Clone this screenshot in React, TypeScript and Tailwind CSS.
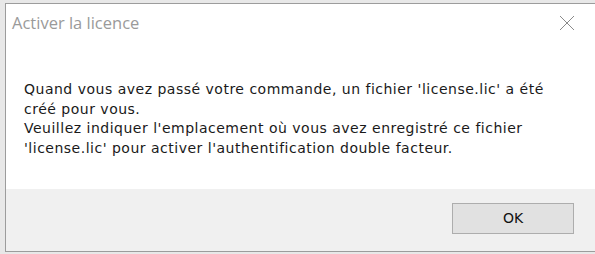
export default function App() {
  return (
    <div className="w-[595px] h-[254px] overflow-hidden bg-[#e8e8e8] pt-[3px] pl-[5px]">
      <div className="w-[600px] h-[249px] flex flex-col bg-white border-l border-t border-b border-[#9c9c9c] font-['Liberation_Sans',sans-serif]">
        {/* title bar */}
        <div className="h-[38px] flex items-center justify-between pl-[6px] pr-[20px]">
          <span className="text-[16.5px] text-[#9a9a9a] font-['Open_Sans',sans-serif] leading-none">Activer la licence</span>
          <svg width="16" height="16" viewBox="0 0 16 16" className="mr-[10px]">
            <path d="M1 1 L15 15 M15 1 L1 15" stroke="#8a8a8a" strokeWidth="1" fill="none" />
          </svg>
        </div>
        {/* message */}
        <div className="flex-1 pl-[18px] pt-[38px] text-[14px] leading-[19.5px] text-[#1a1a1a] font-['DejaVu_Sans',sans-serif] tracking-[0.5px]">
          <p>Quand vous avez passé votre commande, un fichier 'license.lic' a été</p>
          <p>créé pour vous.</p>
          <p>Veuillez indiquer l'emplacement où vous avez enregistré ce fichier</p>
          <p>'license.lic' pour activer l'authentification double facteur.</p>
        </div>
        {/* buttons */}
        <div className="h-[62px] bg-[#f0f0f0] flex items-start pt-[14px] pl-[446px]">
          <button className="w-[122px] h-[31px] bg-[#e1e1e1] border border-[#adadad] text-[14px] text-[#111] font-['DejaVu_Sans',sans-serif]">
            OK
          </button>
        </div>
      </div>
    </div>
  );
}
